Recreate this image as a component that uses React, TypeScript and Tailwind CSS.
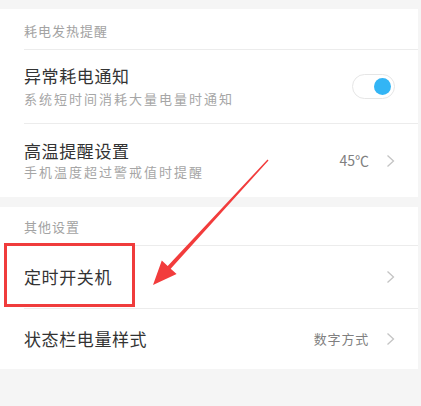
import React from "react";

const font = { fontFamily: '"Noto Sans CJK SC", "Noto Sans", sans-serif' };

function Chevron() {
  return (
    <svg width="9" height="14" viewBox="0 0 9 14" className="shrink-0">
      <path d="M1.5 1.5 L7.5 7 L1.5 12.5" fill="none" stroke="#c4c4c4" strokeWidth="1.3" />
    </svg>
  );
}

function Divider() {
  return <div className="ml-6 h-px bg-[#ececec]" />;
}

function Header({ text, h }: { text: string; h: string }) {
  return (
    <div className={`flex items-center pl-6 ${h}`}>
      <span className="text-[13px] tracking-[1px] text-[#a3a3a3] leading-none">{text}</span>
    </div>
  );
}

export default function App() {
  return (
    <div className="relative w-[421px] h-[406px] bg-[#f5f5f5] overflow-hidden" style={font}>
      <div className="pr-[3px]">
        <div className="h-[9px]" />
        <div className="bg-white">
          <div className="flex items-center pl-6 h-[40px] pt-[2px]">
            <span className="text-[13px] tracking-[1px] text-[#a3a3a3] leading-none">耗电发热提醒</span>
          </div>
          <Divider />
          <div className="flex items-center pl-6 pr-[23px] h-[73px]">
            <div className="flex-1 flex flex-col">
              <span className="text-[17px] tracking-[0.6px] text-[#333] leading-[22px]">异常耗电通知</span>
              <span className="text-[13px] tracking-[2px] text-[#a6a6a6] leading-[18px] mt-[3px]">系统短时间消耗大量电量时通知</span>
            </div>
            <div className="w-[43px] h-[25px] rounded-full border border-[#e6e6e6] bg-white flex items-center justify-end pr-[3px]">
              <div className="w-[17px] h-[17px] rounded-full bg-[#33b5f5]" />
            </div>
          </div>
          <Divider />
          <div className="flex items-center pl-6 pr-[23px] h-[73px]">
            <div className="flex-1 flex flex-col">
              <span className="text-[17px] tracking-[0.6px] text-[#333] leading-[22px]">高温提醒设置</span>
              <span className="text-[13px] tracking-[2px] text-[#a6a6a6] leading-[18px] mt-[1px]">手机温度超过警戒值时提醒</span>
            </div>
            <span className="text-[14px] text-[#808080] mr-[17px]">45℃</span>
            <Chevron />
          </div>
        </div>
        <div className="h-[10px]" />
        <div className="bg-white">
          <Header text="其他设置" h="h-[38px]" />
          <Divider />
          <div className="flex items-center pl-6 pr-[23px] h-[62px]">
            <span className="flex-1 text-[17px] tracking-[0.6px] text-[#333]">定时开关机</span>
            <Chevron />
          </div>
          <Divider />
          <div className="flex items-center pl-6 pr-[23px] h-[60px]">
            <span className="flex-1 text-[17px] tracking-[0.6px] text-[#333]">状态栏电量样式</span>
            <span className="text-[13px] tracking-[0.8px] text-[#808080] mr-[17px]">数字方式</span>
            <Chevron />
          </div>
        </div>
      </div>

      <div className="absolute left-[4px] top-[243px] w-[131px] h-[64px] border-[3px] border-[#f03c3c]" />

      <svg className="absolute left-0 top-0" width="421" height="406" viewBox="0 0 421 406">
        <polygon
          points="153,285 161.8,260.5 167.7,265.9 267.5,159.5 268.5,160.5 170.7,268.7 176.6,274.1"
          fill="#f23c3c"
        />
      </svg>
    </div>
  );
}
